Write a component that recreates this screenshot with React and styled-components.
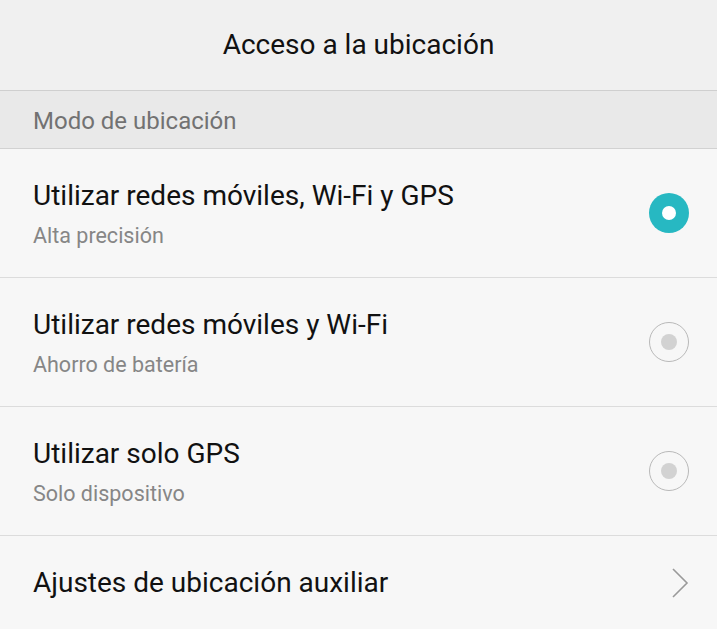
import styled, { createGlobalStyle } from "styled-components";

const GlobalStyle = createGlobalStyle`
    html, body {
        margin: 0;
        padding: 0;
        background-color: #f7f7f7;
        font-family: Roboto, "Noto Sans", sans-serif;
    }
`;

const Page = styled.div`
    width: 717px;
    height: 629px;
    overflow: hidden;
    background-color: #f7f7f7;
`;

const Header = styled.div`
    height: 91px;
    display: flex;
    align-items: center;
    justify-content: center;
    background-color: #f0f0f0;
    border-bottom: 1px solid #cfcfcf;
    font-size: 28px;
    color: #111;
    padding-bottom: 2px;
    box-sizing: border-box;
`;

const Section = styled.div`
    height: 58px;
    display: flex;
    align-items: center;
    padding: 3px 0 0 33px;
    box-sizing: border-box;
    background-color: #e9e9e9;
    border-bottom: 1px solid #d2d2d2;
    font-size: 24px;
    color: #727272;
`;

const Row = styled.div`
    height: ${(props) => props.$height}px;
    display: flex;
    align-items: center;
    justify-content: space-between;
    padding: 0 28px 0 33px;
    border-bottom: ${(props) => (props.$last ? "none" : "1px solid #dcdcdc")};
    box-sizing: border-box;

    .texts {
        display: flex;
        flex-direction: column;
        gap: 11px;
        padding-top: 3px;
    }
    .title {
        font-size: 28px;
        line-height: 32px;
        color: #111;
    }
    .sub {
        font-size: 21.5px;
        line-height: 26px;
        color: #868686;
    }
`;

const Radio = styled.div`
    width: 40px;
    height: 40px;
    border-radius: 50%;
    box-sizing: border-box;
    display: flex;
    align-items: center;
    justify-content: center;
    background-color: ${(props) => (props.$on ? "#27b8c2" : "transparent")};
    border: ${(props) => (props.$on ? "none" : "1.5px solid #b9b9b9")};

    &::after {
        content: "";
        width: ${(props) => (props.$on ? 14 : 16)}px;
        height: ${(props) => (props.$on ? 14 : 16)}px;
        border-radius: 50%;
        background-color: ${(props) => (props.$on ? "#fff" : "#d2d2d2")};
    }
`;

const Chevron = () => (
    <svg width="18" height="30" viewBox="0 0 18 30">
        <polyline points="2,1 16,15 2,29" fill="none" stroke="#9a9a9a" strokeWidth="1.6" />
    </svg>
);

const modes = [
    { title: "Utilizar redes móviles, Wi-Fi y GPS", sub: "Alta precisión", on: true },
    { title: "Utilizar redes móviles y Wi-Fi", sub: "Ahorro de batería", on: false },
    { title: "Utilizar solo GPS", sub: "Solo dispositivo", on: false },
];

const App = () => {
    return (
        <>
            <GlobalStyle />
            <Page>
                <Header>Acceso a la ubicación</Header>
                <Section>Modo de ubicación</Section>
                {modes.map((m) => (
                    <Row key={m.title} $height={129}>
                        <div className="texts">
                            <div className="title">{m.title}</div>
                            <div className="sub">{m.sub}</div>
                        </div>
                        <Radio $on={m.on} />
                    </Row>
                ))}
                <Row $height={93} $last>
                    <div className="title">Ajustes de ubicación auxiliar</div>
                    <Chevron />
                </Row>
            </Page>
        </>
    );
};

export default App;
